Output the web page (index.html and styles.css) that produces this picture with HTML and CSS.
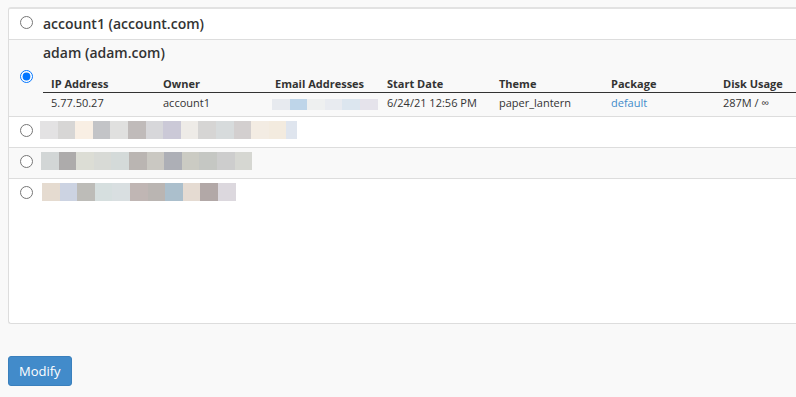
FILE: index.html
```html
<!DOCTYPE html>
<html lang="en">
<head>
  <meta charset="UTF-8">
  <title>Modify Account</title>
  <link rel="stylesheet" href="styles.css">
</head>
<body>

  <div class="accounts">
    <label class="row">
      <input type="radio" name="account">
      <div class="row-body">
        <span class="acct-name">account1 (account.com)</span>
      </div>
    </label>

    <label class="row alt selected">
      <input type="radio" name="account" checked>
      <div class="row-body">
        <span class="acct-name">adam (adam.com)</span>
        <table class="details">
          <thead>
            <tr>
              <th>IP Address</th>
              <th>Owner</th>
              <th>Email Addresses</th>
              <th>Start Date</th>
              <th>Theme</th>
              <th>Package</th>
              <th>Disk Usage</th>
            </tr>
          </thead>
          <tbody>
            <tr>
              <td>5.77.50.27</td>
              <td>account1</td>
              <td>
                <span class="blur">
                  <i style="background:#e7eaef"></i><i style="background:#bed5e9"></i><i style="background:#eef0f0"></i><i style="background:#e8ebf0"></i><i style="background:#dce6ef"></i><i style="background:#e5e3eb"></i>
                </span>
              </td>
              <td>6/24/21 12:56 PM</td>
              <td>paper_lantern</td>
              <td><a href="#">default</a></td>
              <td>287M / &infin;</td>
            </tr>
          </tbody>
        </table>
      </div>
    </label>

    <label class="row">
      <input type="radio" name="account">
      <div class="row-body">
        <span class="blur big">
          <i style="background:#e3e2e3"></i><i style="background:#d7d6d5"></i><i style="background:#f9efe4"></i><i style="background:#c3c4c7"></i><i style="background:#e0e0df"></i><i style="background:#c0bbba"></i><i style="background:#d7d7da"></i><i style="background:#cbc9d7"></i><i style="background:#eeebe7"></i><i style="background:#d6d5d4"></i><i style="background:#d7dbdc"></i><i style="background:#d3cfcf"></i><i style="background:#f3ece3"></i><i style="background:#f3ebdf"></i><i class="half" style="background:#dfe5ee"></i>
        </span>
      </div>
    </label>

    <label class="row alt">
      <input type="radio" name="account">
      <div class="row-body">
        <span class="blur big shift1">
          <i style="background:#d2d6d6"></i><i style="background:#adabab"></i><i style="background:#dcddd5"></i><i style="background:#d8dad6"></i><i style="background:#d4dad9"></i><i style="background:#bab5b2"></i><i style="background:#cac8c2"></i><i style="background:#adafb6"></i><i style="background:#cbcbc3"></i><i style="background:#c5c7c3"></i><i style="background:#cdcdcd"></i><i style="background:#d6d7d2"></i>
        </span>
      </div>
    </label>

    <label class="row last">
      <input type="radio" name="account">
      <div class="row-body">
        <span class="blur big shift2">
          <i style="background:#e5dbd0"></i><i style="background:#ccd3e2"></i><i style="background:#bdbcb8"></i><i style="background:#d6dfdf"></i><i style="background:#d9dfe1"></i><i style="background:#c0b6b4"></i><i style="background:#bab5b2"></i><i style="background:#abbfcc"></i><i style="background:#e5dbd2"></i><i style="background:#b2a8a7"></i><i style="background:#dcd8de"></i>
        </span>
      </div>
    </label>
  </div>

  <button type="button" class="btn-primary">Modify</button>

</body>
</html>
```

FILE: styles.css
```css
html {
  overflow: hidden;
}
body {
  font-family: "Open Sans", Arial, sans-serif;
  font-size: 12px;
  color: #333;
  margin: 0;
  padding: 7px 0 0 8px;
  background-color: #f9f9f9;
  height: 100vh;
  box-sizing: border-box;
}
.accounts {
  background-color: white;
  border: 1px solid #ddd;
  border-top: 2px solid #e2e2e2;
  border-right: none;
  border-radius: 3px 0 0 3px;
  width: 830px;
  height: 317px;
  display: flex;
  flex-direction: column;
  box-sizing: border-box;
}
.row {
  display: flex;
  align-items: flex-start;
  border-bottom: 1px solid #ddd;
  min-height: 30px;
  cursor: pointer;
}
.row.alt {
  background-color: #f9f9f9;
}
.row.last {
  border-bottom: none;
  flex: 1;
}
.row input[type="radio"] {
  margin: 7px 10px 0 11px;
  width: 13px;
  height: 13px;
  flex: none;
}
.row.selected input[type="radio"] {
  margin-top: 30px;
}
.row-body {
  flex: 1;
  padding: 4px 0 0 0;
}
.row.selected .row-body {
  padding-top: 2px;
}
.acct-name {
  display: block;
  font-size: 14px;
  font-weight: 600;
  line-height: 21px;
}
.details {
  border-collapse: collapse;
  table-layout: fixed;
  width: 784px;
  margin-top: 13px;
  margin-bottom: 4px;
}
.details th,
.details td {
  width: 96px;
  padding: 0 8px;
  text-align: left;
  white-space: nowrap;
  font-size: 11px;
  overflow: visible;
}
.details th {
  font-weight: 700;
  line-height: 16px;
  border-bottom: 1px solid #333;
}
.details td {
  line-height: 18px;
  padding-top: 1px;
}
.details a {
  color: #428bca;
  text-decoration: none;
}
.blur {
  display: inline-flex;
  vertical-align: middle;
  margin-left: -3px;
}
.blur i {
  display: block;
  width: 17.6px;
  height: 11px;
}
.blur.big {
  margin: 0 0 4px -3px;
}
.blur.big.shift1 {
  margin-left: -2px;
}
.blur.big.shift2 {
  margin-left: -1px;
}
.blur.big i {
  height: 18px;
}
.blur i.half {
  width: 11px;
}
.btn-primary {
  display: block;
  margin-top: 32px;
  font-family: "Open Sans", Arial, sans-serif;
  font-size: 13px;
  color: white;
  background-color: #428bca;
  border: 1px solid #3a80bd;
  border-radius: 3px;
  padding: 0 10px;
  height: 30px;
  cursor: pointer;
}
```
